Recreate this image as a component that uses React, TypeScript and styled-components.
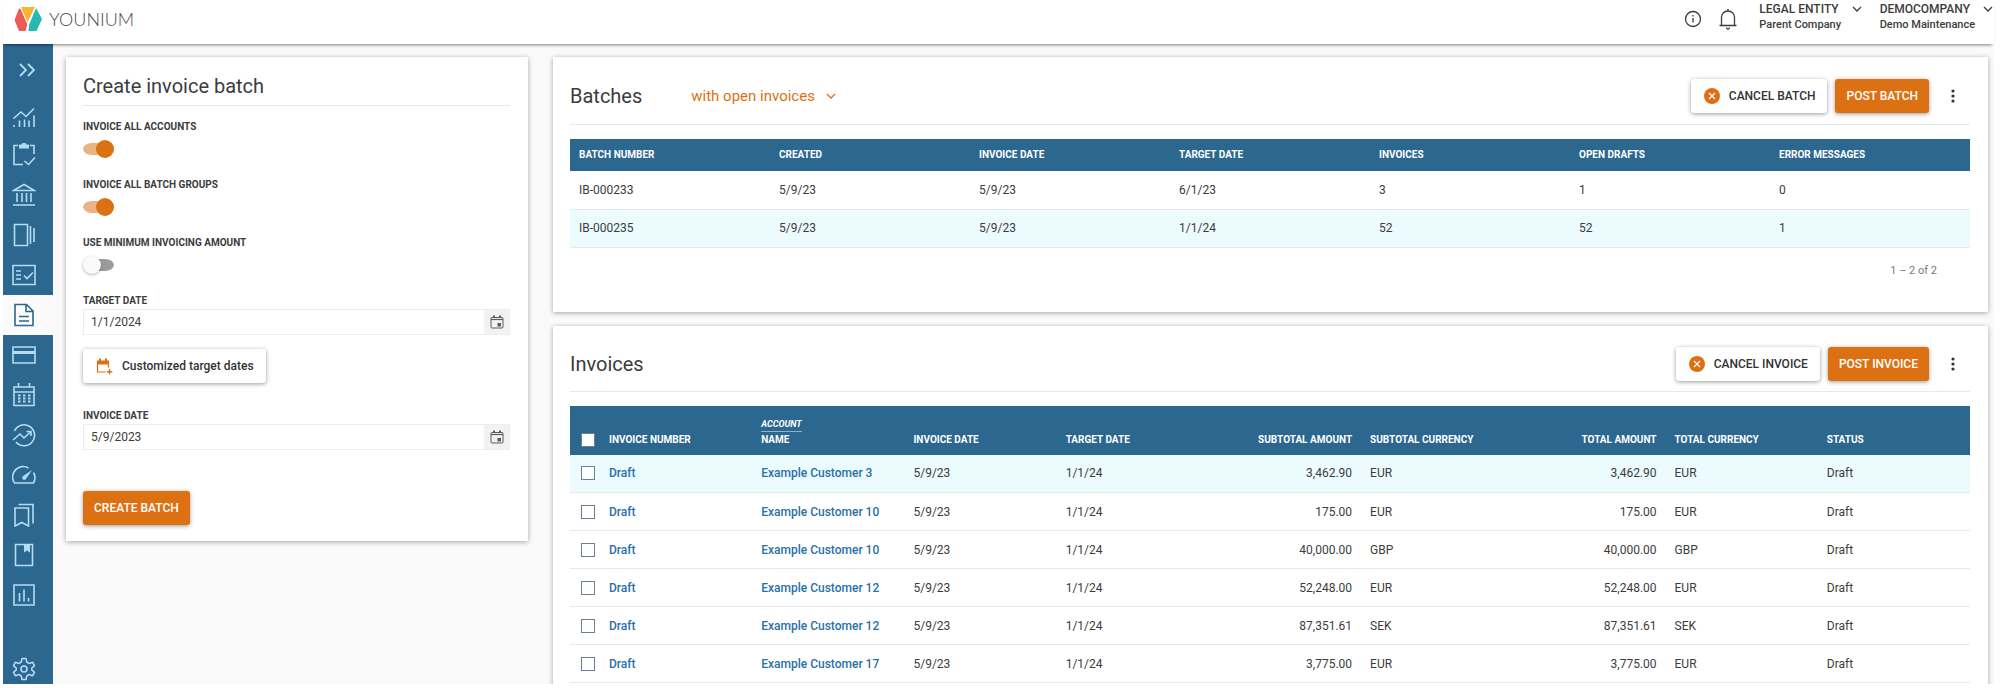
import React from "react";
import styled, { createGlobalStyle, css } from "styled-components";

const colors = {
  blue: "#2b678f",
  iconBlue: "#b4dcf3",
  orange: "#dc7114",
  text: "#3c3c3c",
  link: "#2a70a8",
  line: "#e6e9eb",
  page: "#fafafa",
};

const GlobalStyle = createGlobalStyle`
  *, *::before, *::after { box-sizing: border-box; }
  body {
    margin: 0;
    background: #fff;
    color: ${colors.text};
    font-family: Roboto, "Liberation Sans", sans-serif;
    font-size: 12px;
  }
  button, input, select { font: inherit; color: inherit; }
  button { cursor: pointer; }
`;

const Page = styled.div`
  display: flex;
  flex-direction: column;
  height: 100vh;
  overflow: hidden;
  padding: 0 6px 4px 3px;
`;

const TopBar = styled.header`
  display: flex;
  align-items: flex-start;
  justify-content: space-between;
  flex: none;
  height: 44px;
  background: #fff;
  box-shadow: 0 3px 3px -2px rgba(0, 0, 0, 0.5);
  z-index: 1;
`;

const Brand = styled.a`
  display: flex;
  align-items: center;
  gap: 7px;
  height: 38px;
  padding-left: 11px;
  color: #4a4a4a;
  font-family: Lato, sans-serif;
  font-size: 18px;
  font-weight: 300;
  text-decoration: none;
`;

const TopActions = styled.div`
  display: flex;
  align-items: flex-start;
`;

const IconButton = styled.button`
  display: grid;
  place-items: center;
  width: 35px;
  height: 38px;
  padding: 0;
  border: 0;
  background: none;
`;

const AccountMenu = styled.button`
  display: grid;
  grid-template-columns: auto 12px;
  column-gap: 12px;
  margin-left: 14px;
  padding: 2px 0 0;
  border: 0;
  background: none;
  text-align: left;
  font-weight: 500;
  line-height: 15px;
  white-space: nowrap;

  & + & { margin-left: 17px; }
  svg { margin-top: 1px; }
`;

const AccountDetail = styled.span`
  grid-column: 1 / -1;
  font-size: 11px;
`;

const Body = styled.div`
  display: flex;
  flex: 1;
  min-height: 0;
`;

const SideNav = styled.nav`
  display: flex;
  flex-direction: column;
  flex: none;
  width: 50px;
  background: ${colors.blue};
`;

const NavItem = styled.a<{ $active?: boolean; $size?: "tall" | "short" }>`
  display: flex;
  align-items: center;
  flex: none;
  height: ${(p) => (p.$size === "tall" ? 51 : p.$size === "short" ? 30 : 40)}px;
  padding-left: 9px;
  color: ${(p) => (p.$active ? colors.blue : colors.iconBlue)};
  background: ${(p) => (p.$active ? colors.page : "transparent")};
`;

const NavSpacer = styled.div`
  flex: 1;
`;

const Main = styled.main`
  display: grid;
  grid-template-columns: minmax(280px, 462px) minmax(0, 1fr);
  align-items: start;
  gap: 25px;
  flex: 1;
  min-width: 0;
  overflow: hidden;
  padding: 13px 6px 0 13px;
  background: ${colors.page};
`;

const Stack = styled.div`
  display: grid;
  gap: 14px;
`;

const Card = styled.section`
  padding: 0 18px 16px 17px;
  background: #fff;
  box-shadow: 0 1px 5px rgba(0, 0, 0, 0.35);
`;

const Title = styled.h2`
  margin: 0;
  font-size: 20px;
  line-height: 28px;
  font-weight: 400;
`;

const FormHead = styled.div`
  padding: 15px 0 5px;
  border-bottom: 1px solid ${colors.line};
`;

const Form = styled.form`
  display: flex;
  flex-direction: column;
  align-items: flex-start;
  padding-top: 14px;
`;

const Field = styled.div<{ $dense?: boolean }>`
  display: flex;
  flex-direction: column;
  align-items: flex-start;
  gap: ${(p) => (p.$dense ? 1 : 6)}px;
  width: 100%;
  margin-bottom: ${(p) => (p.$dense ? 14 : 20)}px;
`;

const Label = styled.label`
  font-size: 10px;
  line-height: 14px;
  font-weight: 700;
`;

const Toggle = styled.input`
  appearance: none;
  display: flex;
  align-items: center;
  width: 31px;
  height: 18px;
  margin: 0;
  border: 0 solid transparent;
  border-width: 3px 0;
  border-radius: 9px;
  background: #9b9b9b padding-box;
  cursor: pointer;

  &::before {
    content: "";
    flex: none;
    width: 18px;
    height: 18px;
    border-radius: 50%;
    background: #fafafa;
    box-shadow: 0 1px 3px rgba(0, 0, 0, 0.3);
  }

  &:checked {
    justify-content: flex-end;
    background-color: #ebb381;
  }

  &:checked::before {
    background: ${colors.orange};
    box-shadow: none;
  }
`;

const DateBox = styled.div`
  display: flex;
  width: 100%;
  height: 26px;
  border: 1px solid #ededed;
`;

const DateInput = styled.input`
  flex: 1;
  min-width: 0;
  padding: 0 7px;
  border: 0;
  background: transparent;
  outline: none;
`;

const DateButton = styled.button`
  display: grid;
  place-items: center;
  width: 25px;
  padding: 0;
  border: 0;
  background: #f2f2f2;
`;

const Button = styled.button<{ $primary?: boolean }>`
  display: inline-flex;
  align-items: center;
  gap: 9px;
  height: 34px;
  padding: 0 12px 0 13px;
  border: 0;
  border-radius: 3px;
  background: #fff;
  color: #333;
  font-weight: 500;
  white-space: nowrap;
  box-shadow: 0 1px 4px rgba(0, 0, 0, 0.4);

  ${(p) =>
    p.$primary &&
    css`
      padding: 0 11px;
      background: ${colors.orange};
      color: #fff;
    `}
`;

const FormGap = styled.div`
  height: 26px;
`;

const SubmitRow = styled.div`
  padding-top: 27px;
`;

const CardHead = styled.div`
  display: flex;
  align-items: center;
  padding: 16px 0 5px;
  border-bottom: 1px solid ${colors.line};
  margin-bottom: 14px;
`;

const FilterBox = styled.div`
  display: flex;
  align-items: center;
  gap: 10px;
  height: 46px;
  margin-left: 49px;
  color: ${colors.orange};
`;

const FilterSelect = styled.select`
  appearance: none;
  padding: 0;
  border: 0;
  background: none;
  font-size: 15px;
  line-height: 20px;
  outline: none;
`;

const CardActions = styled.div`
  display: flex;
  align-items: center;
  gap: 8px;
  height: 44px;
  margin-left: auto;
`;

const MoreButton = styled(IconButton)`
  width: 32px;
  margin-right: 1px;
`;

const Table = styled.table`
  width: 100%;
  table-layout: fixed;
  border-collapse: collapse;
`;

const HeadCell = styled.th<{ $right?: boolean; $tall?: boolean }>`
  height: ${(p) => (p.$tall ? 49 : 32)}px;
  padding: ${(p) => (p.$tall ? "0 9px 8px" : "0 9px")};
  vertical-align: ${(p) => (p.$tall ? "bottom" : "middle")};
  text-align: ${(p) => (p.$right ? "right" : "left")};
  background: ${colors.blue};
  color: #fff;
  font-size: 10px;
  line-height: 14px;
  font-weight: 700;
  white-space: nowrap;
`;

const GroupName = styled.span`
  display: block;
  width: fit-content;
  margin-bottom: 1px;
  border-bottom: 1px solid #8fb3cb;
  font-size: 9px;
  font-style: italic;
`;

const Row = styled.tr<{ $selected?: boolean }>`
  background: ${(p) => (p.$selected ? "#ebfbfe" : "#fff")};
`;

const Cell = styled.td<{ $right?: boolean }>`
  height: 38px;
  padding: 0 9px;
  border-bottom: 1px solid ${colors.line};
  text-align: ${(p) => (p.$right ? "right" : "left")};
  white-space: nowrap;
`;

const CheckCol = styled.col`
  width: 30px;
`;

const Check = styled.input`
  appearance: none;
  display: block;
  width: 14px;
  height: 14px;
  margin: 0 0 0 2px;
  border: 1px solid #6d7f92;
  background: #fff;
`;

const CellLink = styled.a`
  color: ${colors.link};
  font-weight: 500;
  text-decoration: none;
`;

const Pager = styled.div`
  padding: 16px 33px 18px;
  color: #7b7b7b;
  font-size: 11px;
  line-height: 14px;
  text-align: right;
`;

/* ---------- icons ---------- */

const Icon = ({ children, size = 24, width = 1.6 }: { children: React.ReactNode; size?: number; width?: number }) => (
  <svg width={size} height={size} viewBox={`0 0 ${size} ${size}`} fill="none" stroke="currentColor" strokeWidth={width} aria-hidden="true">
    {children}
  </svg>
);

const Logo = () => (
  <svg width="28" height="26" viewBox="0 0 28 26" aria-hidden="true">
    <path d="M5 2.500 7 3 13.500 18 11.500 25H5L0.500 14Z" fill="#ee5a55" />
    <path d="M7 1H21L13.500 17Z" fill="#f6b52c" />
    <path d="M22 2 28 13 22.500 25H14.500L15 19Z" fill="#27b8b4" />
    <path d="M6.500 1.500 13.500 17.500 21.500 1.500M14 17 13 25.500" stroke="#fff" fill="none" />
  </svg>
);

const Chevron = () => (
  <svg width="12" height="12" viewBox="0 0 12 12" fill="none" stroke="currentColor" strokeWidth="1.3" aria-hidden="true">
    <path d="M2 4l4 4 4-4" />
  </svg>
);

const InfoIcon = () => (
  <Icon width={1.3}>
    <circle cx="12" cy="12" r="7.500" />
    <path d="M12 11v4.500M12 8v1.500" />
  </Icon>
);

const BellIcon = () => (
  <Icon width={1.3}>
    <path d="M3.500 18.500h17M5.500 18.500V10a6.500 6 0 0 1 13 0v8.500M12 4V2M10.500 20.500a1.500 1.500 0 0 0 3 0" />
  </Icon>
);

const CancelIcon = () => (
  <svg width="16" height="16" viewBox="0 0 16 16" aria-hidden="true">
    <circle cx="8" cy="8" r="8" fill={colors.orange} />
    <path d="M5 5l6 6M11 5l-6 6" stroke="#fff" strokeWidth="1.200" />
  </svg>
);

const MoreIcon = () => (
  <svg width="4" height="16" viewBox="0 0 4 16" fill="#333" aria-hidden="true">
    <circle cx="2" cy="3" r="1.600" />
    <circle cx="2" cy="8" r="1.600" />
    <circle cx="2" cy="13" r="1.600" />
  </svg>
);

const DateIcon = () => (
  <svg width="14" height="14" viewBox="0 0 14 14" fill="none" stroke="#5c5c5c" aria-hidden="true">
    <rect x="1" y="2.500" width="12" height="10.500" rx="1" />
    <path d="M1 4.500h12" strokeWidth="1.200" />
    <path d="M3 .5h2v2.500H3zM9 .5h2v2.500H9zM7.500 8H11v3.500H7.500z" fill="#5c5c5c" stroke="none" />
  </svg>
);

const CustomDatesIcon = () => (
  <svg width="17" height="17" viewBox="0 0 17 17" fill="none" stroke={colors.orange} aria-hidden="true">
    <path d="M12.500 3.500v6M1.500 3v11H9.500" strokeWidth="1.200" />
    <path d="M1 2.500h12v4H1zM3 .5h2v2H3zM9 .5h2v2H9z" fill={colors.orange} stroke="none" />
    <path d="M13.500 11v5.500M10.800 13.700h5.500" strokeWidth="1.400" />
  </svg>
);

const navIcons: { name: string; active?: boolean; art: React.ReactNode }[] = [
  { name: "Dashboard", art: <path d="M1.500 15.500 9 9l5 4.500L22 5.500M1 23h2M7.500 17.500V24M12.500 16.500V24M17 17.500V24M22 12.500V24" /> },
  {
    name: "Orders",
    art: (
      <>
        <path d="M6 2.500H2v19h9M18 2.500h4V11M12.500 18l4 3.500 6.500-7" />
        <path d="M7 1.500h3a2 2 0 0 1 4 0h3v4H7z" fill="currentColor" stroke="none" />
      </>
    ),
  },
  { name: "Accounts", art: <path d="M1.500 7.500 12 1.500l10.500 6zM5 10v9M10 10v9M14.500 10v9M19 10v9M1 22h22" /> },
  { name: "Products", art: <path d="M2.500 1.500h13v21h-13zM18.500 3v18M22 5v14" /> },
  { name: "Subscriptions", art: <path d="M1 2.500h22v19H1zM4 8h5M4 12h5M4 16h5M12 12.500l3 3 6-6" /> },
  { name: "Invoices", active: true, art: <path d="M3 1.500h11.500l6.500 6.500v14.500H3zM14 1.500V8.500h7M7 13.500h10M7 18h10" /> },
  {
    name: "Payments",
    art: (
      <>
        <path d="M1 4h22v16H1z" />
        <path d="M1 8h22v3H1z" fill="currentColor" stroke="none" />
      </>
    ),
  },
  {
    name: "Calendar",
    art: (
      <>
        <path d="M2 4h20v18.500H2zM2 9h20M6.500 0v4M17.500 0v4" />
        <path d="M6 12.500h12.500M6 15.500h12.500M6 18.500h12.500" strokeWidth="2" strokeDasharray="2.500 2.500" />
      </>
    ),
  },
  { name: "Forecast", art: <path d="M2.500 8A10.500 10.500 0 1 1 4 19M1 17l7-6 4 4 7-6.500M14.500 8.500H19V13" /> },
  {
    name: "Metrics",
    art: (
      <>
        <path d="M16.500 5A10.500 10.500 0 0 0 2.500 20h19A10.500 10.500 0 0 0 21.500 9.500" />
        <path d="M20 7 13.500 16.500a2.200 2.200 0 0 1-3-3z" fill="currentColor" stroke="none" />
      </>
    ),
  },
  { name: "Bookmarks", art: <path d="M3 5h13.500v18L9.800 19.500 3 23zM6.500 1.500h14.500V20.500" /> },
  {
    name: "Ledger",
    art: (
      <>
        <path d="M3.500 1.500h17v21h-17z" />
        <path d="M12 1.500h6v8l-3-2-3 2z" fill="currentColor" stroke="none" />
      </>
    ),
  },
  { name: "Reports", art: <path d="M2 2h20v20H2zM7.500 10v8.500M12 6.500v12M16.500 15v3.500" /> },
];

const GearIcon = () => (
  <Icon>
    <circle cx="12" cy="12" r="3" />
    <path d="M10 1.500h4l.8 3.600 2.200 1.300 3.500-1.200 2 3.500-2.700 2.300v2l2.700 2.300-2 3.500-3.500-1.200-2.200 1.300-.8 3.600h-4l-.8-3.600L7 17.600l-3.500 1.200-2-3.500L4.200 13v-2L1.500 8.700l2-3.500L7 6.400l2.200-1.300z" strokeLinejoin="round" />
  </Icon>
);

/* ---------- data ---------- */

const batchColumns = ["BATCH NUMBER", "CREATED", "INVOICE DATE", "TARGET DATE", "INVOICES", "OPEN DRAFTS", "ERROR MESSAGES"];
const batches = [
  ["IB-000233", "5/9/23", "5/9/23", "6/1/23", "3", "1", "0"],
  ["IB-000235", "5/9/23", "5/9/23", "1/1/24", "52", "52", "1"],
];

const invoices = [
  { customer: "Example Customer 3", amount: "3,462.90", currency: "EUR" },
  { customer: "Example Customer 10", amount: "175.00", currency: "EUR" },
  { customer: "Example Customer 10", amount: "40,000.00", currency: "GBP" },
  { customer: "Example Customer 12", amount: "52,248.00", currency: "EUR" },
  { customer: "Example Customer 12", amount: "87,351.61", currency: "SEK" },
  { customer: "Example Customer 17", amount: "3,775.00", currency: "EUR" },
];

/* ---------- sections ---------- */

const ToggleField = ({ id, label, on }: { id: string; label: string; on?: boolean }) => (
  <Field>
    <Label htmlFor={id}>{label}</Label>
    <Toggle id={id} type="checkbox" role="switch" defaultChecked={on} />
  </Field>
);

const DateField = ({ id, label, value }: { id: string; label: string; value: string }) => (
  <Field $dense>
    <Label htmlFor={id}>{label}</Label>
    <DateBox>
      <DateInput id={id} type="text" defaultValue={value} />
      <DateButton type="button" aria-label="Open calendar">
        <DateIcon />
      </DateButton>
    </DateBox>
  </Field>
);

const CreateBatch = () => (
  <Card>
    <FormHead>
      <Title>Create invoice batch</Title>
    </FormHead>
    <Form onSubmit={(e) => e.preventDefault()}>
      <ToggleField id="all-accounts" label="INVOICE ALL ACCOUNTS" on />
      <ToggleField id="all-groups" label="INVOICE ALL BATCH GROUPS" on />
      <ToggleField id="minimum" label="USE MINIMUM INVOICING AMOUNT" />
      <DateField id="target-date" label="TARGET DATE" value="1/1/2024" />
      <Button type="button">
        <CustomDatesIcon />
        Customized target dates
      </Button>
      <FormGap />
      <DateField id="invoice-date" label="INVOICE DATE" value="5/9/2023" />
      <SubmitRow>
        <Button $primary type="submit">CREATE BATCH</Button>
      </SubmitRow>
    </Form>
  </Card>
);

const Actions = ({ noun }: { noun: string }) => (
  <CardActions>
    <Button type="button">
      <CancelIcon />
      CANCEL {noun}
    </Button>
    <Button $primary type="button">POST {noun}</Button>
    <MoreButton type="button" aria-label="More actions">
      <MoreIcon />
    </MoreButton>
  </CardActions>
);

const Batches = () => (
  <Card>
    <CardHead>
      <Title>Batches</Title>
      <FilterBox>
        <FilterSelect aria-label="Batch filter">
          <option>with open invoices</option>
        </FilterSelect>
        <Chevron />
      </FilterBox>
      <Actions noun="BATCH" />
    </CardHead>
    <Table>
      <thead>
        <tr>
          {batchColumns.map((c) => (
            <HeadCell key={c}>{c}</HeadCell>
          ))}
        </tr>
      </thead>
      <tbody>
        {batches.map((b, i) => (
          <Row key={b[0]} $selected={i === 1}>
            {b.map((v, k) => (
              <Cell key={k}>{v}</Cell>
            ))}
          </Row>
        ))}
      </tbody>
    </Table>
    <Pager>1 – 2 of 2</Pager>
  </Card>
);

const Invoices = () => (
  <Card>
    <CardHead>
      <Title>Invoices</Title>
      <Actions noun="INVOICE" />
    </CardHead>
    <Table>
      <colgroup>
        <CheckCol />
        <col span={9} />
      </colgroup>
      <thead>
        <tr>
          <HeadCell $tall>
            <Check type="checkbox" aria-label="Select all invoices" />
          </HeadCell>
          <HeadCell $tall>INVOICE NUMBER</HeadCell>
          <HeadCell $tall>
            <GroupName>ACCOUNT</GroupName>
            NAME
          </HeadCell>
          <HeadCell $tall>INVOICE DATE</HeadCell>
          <HeadCell $tall>TARGET DATE</HeadCell>
          <HeadCell $tall $right>SUBTOTAL AMOUNT</HeadCell>
          <HeadCell $tall>SUBTOTAL CURRENCY</HeadCell>
          <HeadCell $tall $right>TOTAL AMOUNT</HeadCell>
          <HeadCell $tall>TOTAL CURRENCY</HeadCell>
          <HeadCell $tall>STATUS</HeadCell>
        </tr>
      </thead>
      <tbody>
        {invoices.map((v, i) => (
          <Row key={i} $selected={i === 0}>
            <Cell>
              <Check type="checkbox" aria-label={`Select invoice for ${v.customer}`} />
            </Cell>
            <Cell><CellLink href="#">Draft</CellLink></Cell>
            <Cell><CellLink href="#">{v.customer}</CellLink></Cell>
            <Cell>5/9/23</Cell>
            <Cell>1/1/24</Cell>
            <Cell $right>{v.amount}</Cell>
            <Cell>{v.currency}</Cell>
            <Cell $right>{v.amount}</Cell>
            <Cell>{v.currency}</Cell>
            <Cell>Draft</Cell>
          </Row>
        ))}
      </tbody>
    </Table>
  </Card>
);

export default function App() {
  return (
    <Page>
      <GlobalStyle />
      <TopBar>
        <Brand href="#">
          <Logo />
          YOUNIUM
        </Brand>
        <TopActions>
          <IconButton type="button" aria-label="Information"><InfoIcon /></IconButton>
          <IconButton type="button" aria-label="Notifications"><BellIcon /></IconButton>
          <AccountMenu type="button">
            LEGAL ENTITY
            <Chevron />
            <AccountDetail>Parent Company</AccountDetail>
          </AccountMenu>
          <AccountMenu type="button">
            DEMOCOMPANY
            <Chevron />
            <AccountDetail>Demo Maintenance</AccountDetail>
          </AccountMenu>
        </TopActions>
      </TopBar>
      <Body>
        <SideNav aria-label="Main">
          <NavItem href="#" $size="tall" aria-label="Expand menu">
            <Icon width={1.8}><path d="M8 6l6 6-6 6M16 6l6 6-6 6" /></Icon>
          </NavItem>
          {navIcons.map((n) => (
            <NavItem key={n.name} href="#" $active={n.active} aria-label={n.name}>
              <Icon>{n.art}</Icon>
            </NavItem>
          ))}
          <NavSpacer />
          <NavItem href="#" $size="short" aria-label="Settings"><GearIcon /></NavItem>
        </SideNav>
        <Main>
          <CreateBatch />
          <Stack>
            <Batches />
            <Invoices />
          </Stack>
        </Main>
      </Body>
    </Page>
  );
}
